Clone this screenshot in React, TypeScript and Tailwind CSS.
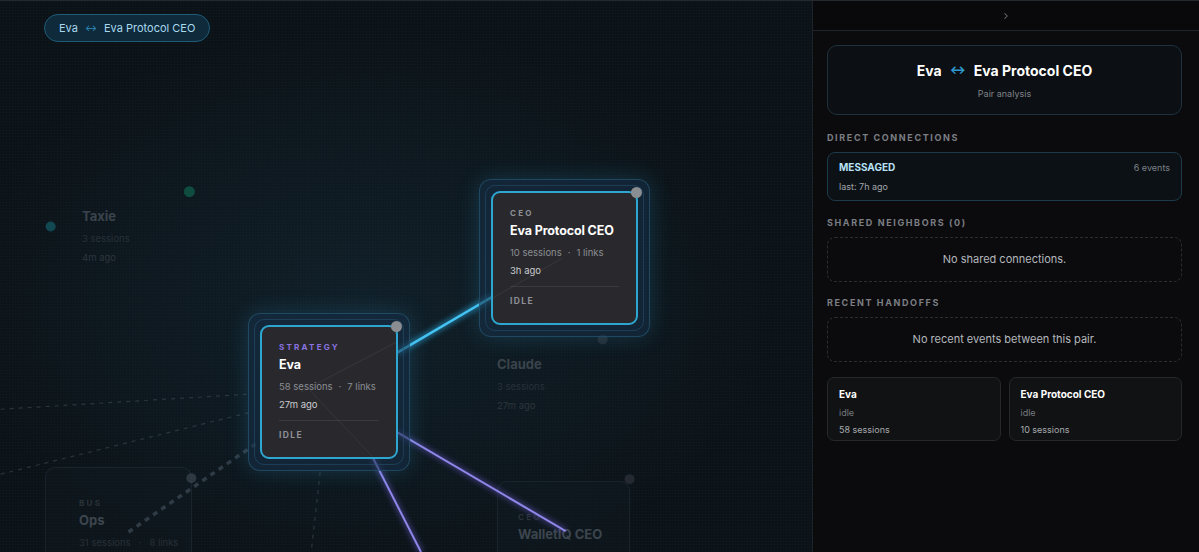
import React from 'react';

const font = { fontFamily: 'Inter, "Noto Sans", sans-serif' };

type NodeProps = {
  x: number;
  y: number;
  w: number;
  role: string;
  roleClass: string;
  name: string;
  sessions: string;
  links: string;
  ago: string;
};

// Selected node card with the glowing halo around it
function FocusNode({ x, y, w, role, roleClass, name, sessions, links, ago }: NodeProps) {
  return (
    <div className="absolute" style={{ left: x, top: y }}>
      <div className="rounded-[12px] border border-[#2a5f7c]/60 bg-[#16324a]/55 p-[5px] shadow-[0_0_22px_rgba(56,170,220,0.22)]">
        <div className="rounded-[10px] border border-[#2a5576]/50 p-[5px]">
          <div
            className="relative h-[134px] rounded-[9px] border-2 border-[#2fa6cf] bg-[#29292d] px-[17px] pt-[14px]"
            style={{ width: w }}
          >
            <span className="absolute -right-[6px] -top-[6px] h-[11px] w-[11px] rounded-full bg-[#8a8d92]" />
            <div className={`text-[8px] font-bold leading-[12px] tracking-[0.28em] ${roleClass}`}>{role}</div>
            <div className="mt-[3px] whitespace-nowrap text-[12.5px] font-bold leading-[18px] tracking-[-0.01em] text-white">{name}</div>
            <div className="mt-[6px] whitespace-nowrap text-[9.5px] leading-[14px] text-[#8b8d93]">
              {sessions}
              <span className="mx-[6px]">·</span>
              {links}
            </div>
            <div className="mt-[4px] text-[9.5px] leading-[14px] text-[#c9cbd0]">{ago}</div>
            <div className="mt-[8px] border-t border-[#3a3a3f]" />
            <div className="mt-[8px] text-[8.5px] font-bold leading-[12px] tracking-[0.16em] text-[#8e9096]">IDLE</div>
          </div>
        </div>
      </div>
    </div>
  );
}

function GhostNode({ x, y, name, sessions, ago }: { x: number; y: number; name: string; sessions: string; ago: string }) {
  return (
    <div className="absolute text-[#3a434b]" style={{ left: x, top: y }}>
      <div className="text-[13px] font-bold">{name}</div>
      <div className="mt-[5px] text-[9.5px] text-[#283038]">{sessions}</div>
      <div className="mt-[5px] text-[9.5px] text-[#2d353d]">{ago}</div>
    </div>
  );
}

function GhostCard({ x, y, w, pl, role, name, sessions, links }: { x: number; y: number; w: number; pl: number; role: string; name: string; sessions: string; links: string }) {
  return (
    <div
      className="absolute h-[120px] rounded-[10px] border border-[#1c2a33]/70 bg-[#111c24]/40 pt-[29px] text-[#343d45]"
      style={{ left: x, top: y, width: w, paddingLeft: pl }}
    >
      <div className="text-[8px] font-bold tracking-[0.28em] text-[#2a333a]">{role}</div>
      <div className="mt-[2px] whitespace-nowrap text-[13px] font-bold text-[#3c454d]">{name}</div>
      <div className="mt-[5px] whitespace-nowrap text-[9.5px] text-[#283038]">
        {sessions}
        <span className="mx-[8px]">·</span>
        {links}
      </div>
    </div>
  );
}

function Canvas() {
  return (
    <div className="relative h-full flex-1 overflow-hidden bg-[#0b1217] bg-[radial-gradient(ellipse_at_45%_55%,rgba(26,60,80,0.3),transparent_65%)]">
      {/* faint scanlines */}
      <div className="absolute inset-0 bg-[linear-gradient(rgba(120,160,180,0.025)_1px,transparent_1px),linear-gradient(90deg,rgba(120,160,180,0.015)_1px,transparent_1px)] bg-[size:3px_3px]" />

      <GhostNode x={82} y={206} name="Taxie" sessions="3 sessions" ago="4m ago" />
      <GhostNode x={497} y={354} name="Claude" sessions="3 sessions" ago="27m ago" />
      <GhostCard x={45} y={466} w={147} pl={33} role="BUS" name="Ops" sessions="31 sessions" links="8 links" />
      <GhostCard x={497} y={480} w={133} pl={20} role="CEO" name="WalletIQ CEO" sessions="10 sessions" links="1 links" />

      {/* edges */}
      <svg className="absolute inset-0 h-full w-full" viewBox="0 0 812 552">
        <defs>
          <filter id="glow" x="-20%" y="-20%" width="140%" height="140%">
            <feGaussianBlur stdDeviation="2.5" />
          </filter>
        </defs>
        <g stroke="#3a4a55" strokeWidth="1.2" strokeDasharray="4 5" fill="none" opacity="0.6">
          <line x1="0" y1="409" x2="246" y2="394" />
          <line x1="0" y1="474" x2="250" y2="412" />
          <line x1="320" y1="472" x2="311" y2="552" />
        </g>
        <line x1="128" y1="532" x2="255" y2="444" stroke="#4a5966" strokeWidth="3.5" strokeDasharray="5 5" opacity="0.55" />
        <circle cx="50" cy="226" r="5" fill="#135560" opacity="0.8" />
        <circle cx="189" cy="191" r="5.5" fill="#0f5a48" opacity="0.8" />
        <circle cx="191" cy="478" r="5" fill="#3a4650" opacity="0.7" />
        <circle cx="603" cy="339" r="5" fill="#2a3038" opacity="0.8" />
        <circle cx="630" cy="479" r="5" fill="#2a3038" opacity="0.8" />

        <g fill="none">
          <line x1="397" y1="432" x2="566" y2="531" stroke="#7b68ee" strokeWidth="6" opacity="0.35" filter="url(#glow)" />
          <line x1="372" y1="456" x2="421" y2="552" stroke="#7b68ee" strokeWidth="6" opacity="0.35" filter="url(#glow)" />
          <line x1="397" y1="432" x2="566" y2="531" strokeWidth="2" stroke="#8f86e8" />
          <line x1="372" y1="456" x2="421" y2="552" strokeWidth="2" stroke="#8f86e8" />
        </g>
        <line x1="396" y1="353" x2="493" y2="296" stroke="#2ab0e8" strokeWidth="7" opacity="0.45" filter="url(#glow)" />
        <line x1="396" y1="353" x2="493" y2="296" stroke="#45c3f2" strokeWidth="2.5" />
      </svg>

      <FocusNode x={479} y={178} w={147} role="CEO" roleClass="text-[#8e9096]" name="Eva Protocol CEO" sessions="10 sessions" links="1 links" ago="3h ago" />
      <FocusNode x={248} y={312} w={138} role="STRATEGY" roleClass="text-[#8a73e0]" name="Eva" sessions="58 sessions" links="7 links" ago="27m ago" />

      {/* edges that show faintly through the cards */}
      <svg className="pointer-events-none absolute inset-0 h-full w-full" viewBox="0 0 812 552">
        <line x1="300" y1="392" x2="396" y2="342" stroke="#7d7f86" strokeWidth="0.8" opacity="0.2" />
        <line x1="305" y1="385" x2="372" y2="456" stroke="#7d7f86" strokeWidth="0.8" opacity="0.18" />
        <line x1="492" y1="298" x2="562" y2="258" stroke="#7d7f86" strokeWidth="0.8" opacity="0.2" />
      </svg>

      <div className="absolute left-[44px] top-[13px] flex h-[28px] items-center gap-[7px] rounded-full border border-[#1f5b78] bg-[#0f2a3a] px-[14px] text-[11px] text-[#a9d9ef]">
        <span>Eva</span>
        <span className="text-[9px] text-[#2f8fc0]">↔</span>
        <span>Eva Protocol CEO</span>
      </div>
    </div>
  );
}

function SectionLabel({ children, className }: { children: React.ReactNode; className: string }) {
  return <div className={`text-[9px] font-bold leading-[12px] tracking-[0.18em] text-[#7b7e84] ${className}`}>{children}</div>;
}

function Panel() {
  return (
    <div className="flex h-full w-[387px] flex-col border-l border-[#1d2328] bg-[#0b0b0d]">
      <div className="flex h-[30px] items-center justify-center border-b border-[#1e262c] bg-[#09090b] text-[#6b6f75]">
        <svg width="10" height="10" viewBox="0 0 24 24" fill="none" stroke="currentColor" strokeWidth="2.5" strokeLinecap="round" strokeLinejoin="round">
          <path d="m9 18 6-6-6-6" />
        </svg>
      </div>
      <div className="flex flex-col pl-[14px] pr-[17px] pt-[14px]">
        <div className="flex h-[70px] flex-col items-center justify-center rounded-[10px] border border-[#1d323d] bg-[#0c0f13]">
          <div className="flex items-center gap-[8px] text-[14px] font-bold text-white">
            <span>Eva</span>
            <span className="text-[12px] text-[#2f9ad0]">↔</span>
            <span>Eva Protocol CEO</span>
          </div>
          <div className="mt-[6px] text-[9px] text-[#7f838a]">Pair analysis</div>
        </div>

        <SectionLabel className="mt-[17px]">DIRECT CONNECTIONS</SectionLabel>
        <div className="mt-[8px] flex h-[49px] flex-col justify-center rounded-[8px] border border-[#1c3a4a] bg-[#0c1116] px-[11px]">
          <div className="flex items-center justify-between">
            <span className="text-[10px] font-bold text-[#b7e2f5]">MESSAGED</span>
            <span className="text-[9px] text-[#7d8187]">6 events</span>
          </div>
          <div className="mt-[5px] text-[9px] text-[#a2a5aa]">last: 7h ago</div>
        </div>

        <SectionLabel className="mt-[16px]">SHARED NEIGHBORS (0)</SectionLabel>
        <div className="mt-[8px] flex h-[45px] items-center justify-center rounded-[8px] border border-dashed border-[#2a2d32] text-[11px] text-[#b5b8bd]">
          No shared connections.
        </div>

        <SectionLabel className="mt-[15px]">RECENT HANDOFFS</SectionLabel>
        <div className="mt-[8px] flex h-[45px] items-center justify-center rounded-[8px] border border-dashed border-[#2a2d32] text-[11px] text-[#b5b8bd]">
          No recent events between this pair.
        </div>

        <div className="mt-[15px] grid grid-cols-2 gap-[8px]">
          {[
            { name: 'Eva', sessions: '58 sessions' },
            { name: 'Eva Protocol CEO', sessions: '10 sessions' },
          ].map((a) => (
            <div key={a.name} className="h-[64px] rounded-[7px] border border-[#25272b] bg-[#111214] px-[11px] pt-[9px]">
              <div className="text-[10px] font-bold text-white">{a.name}</div>
              <div className="mt-[4px] text-[9px] text-[#75797f]">idle</div>
              <div className="mt-[3px] text-[9px] text-[#a7aaaf]">{a.sessions}</div>
            </div>
          ))}
        </div>
      </div>
    </div>
  );
}

export default function App() {
  return (
    <div className="flex h-[552px] w-[1199px] overflow-hidden border-t border-[#23292e] bg-[#0b0b0d]" style={font}>
      <Canvas />
      <Panel />
    </div>
  );
}
